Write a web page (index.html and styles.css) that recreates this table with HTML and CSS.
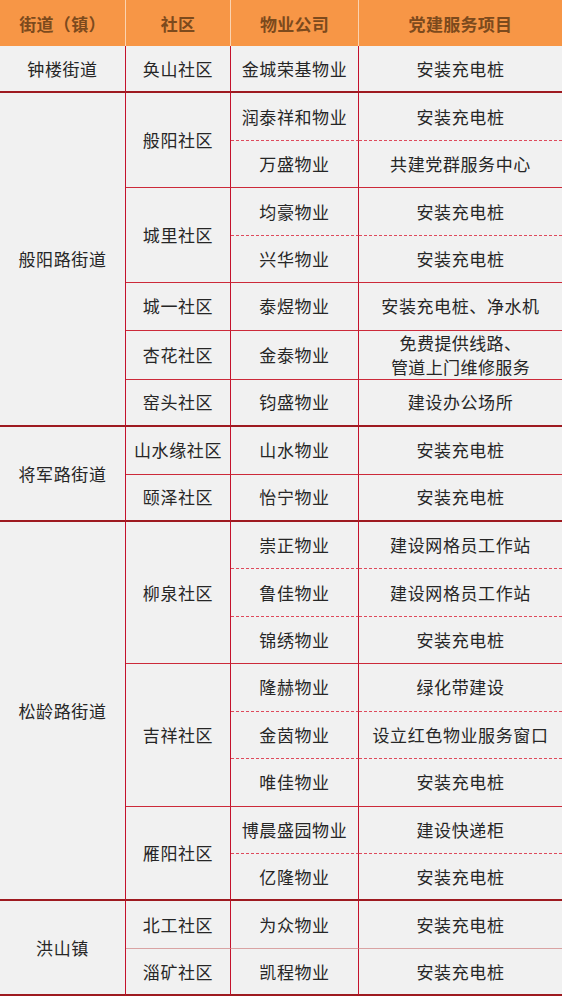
FILE: index.html
```html
<!DOCTYPE html>
<html lang="zh">
<head>
<meta charset="utf-8">
<title>党建服务项目</title>
<link rel="stylesheet" href="styles.css">
</head>
<body>
<table class="grid">
  <colgroup>
    <col class="c1"><col class="c2"><col class="c3"><col class="c4">
  </colgroup>
  <thead>
    <tr class="head">
      <th>街道（镇）</th><th>社区</th><th>物业公司</th><th>党建服务项目</th>
    </tr>
  </thead>
  <tbody>
    <tr>
      <td class="st bt">钟楼街道</td><td class="cm bt">奂山社区</td><td class="co bt">金城荣基物业</td><td class="pj bt">安装充电桩</td>
    </tr>
    <tr>
      <td class="st bt" rowspan="7">般阳路街道</td><td class="cm bs" rowspan="2">般阳社区</td><td class="co bd">润泰祥和物业</td><td class="pj bd">安装充电桩</td>
    </tr>
    <tr>
      <td class="co bs">万盛物业</td><td class="pj bs">共建党群服务中心</td>
    </tr>
    <tr>
      <td class="cm bs" rowspan="2">城里社区</td><td class="co bd">均豪物业</td><td class="pj bd">安装充电桩</td>
    </tr>
    <tr>
      <td class="co bs">兴华物业</td><td class="pj bs">安装充电桩</td>
    </tr>
    <tr>
      <td class="cm bs">城一社区</td><td class="co bs">泰煜物业</td><td class="pj bs">安装充电桩、净水机</td>
    </tr>
    <tr>
      <td class="cm bs">杏花社区</td><td class="co bs">金泰物业</td><td class="pj bs two">免费提供线路、<br>管道上门维修服务</td>
    </tr>
    <tr>
      <td class="cm bt">窑头社区</td><td class="co bt">钧盛物业</td><td class="pj bt">建设办公场所</td>
    </tr>
    <tr>
      <td class="st bt" rowspan="2">将军路街道</td><td class="cm bs">山水缘社区</td><td class="co bs">山水物业</td><td class="pj bs">安装充电桩</td>
    </tr>
    <tr>
      <td class="cm bt">颐泽社区</td><td class="co bt">怡宁物业</td><td class="pj bt">安装充电桩</td>
    </tr>
    <tr>
      <td class="st bt" rowspan="8">松龄路街道</td><td class="cm bs" rowspan="3">柳泉社区</td><td class="co bd">崇正物业</td><td class="pj bd">建设网格员工作站</td>
    </tr>
    <tr>
      <td class="co bd">鲁佳物业</td><td class="pj bd">建设网格员工作站</td>
    </tr>
    <tr>
      <td class="co bs">锦绣物业</td><td class="pj bs">安装充电桩</td>
    </tr>
    <tr>
      <td class="cm bs" rowspan="3">吉祥社区</td><td class="co bd">隆赫物业</td><td class="pj bd">绿化带建设</td>
    </tr>
    <tr>
      <td class="co bd">金茵物业</td><td class="pj bd">设立红色物业服务窗口</td>
    </tr>
    <tr>
      <td class="co bs">唯佳物业</td><td class="pj bs">安装充电桩</td>
    </tr>
    <tr>
      <td class="cm bt" rowspan="2">雁阳社区</td><td class="co bd">博晨盛园物业</td><td class="pj bd">建设快递柜</td>
    </tr>
    <tr>
      <td class="co bt">亿隆物业</td><td class="pj bt">安装充电桩</td>
    </tr>
    <tr>
      <td class="st bt" rowspan="2">洪山镇</td><td class="cm bl">北工社区</td><td class="co bl">为众物业</td><td class="pj bl">安装充电桩</td>
    </tr>
    <tr>
      <td class="cm bt">淄矿社区</td><td class="co bt">凯程物业</td><td class="pj bt">安装充电桩</td>
    </tr>
  </tbody>
</table>
</body>
</html>
```

FILE: styles.css
```css
html, body {
  margin: 0;
  padding: 0;
  background: #ffffff;
}

body {
  width: 562px;
  overflow: hidden;
  font-family: "Noto Sans CJK SC", "Noto Sans", sans-serif;
}

.grid {
  border-collapse: separate;
  border-spacing: 0;
  width: 562px;
  table-layout: fixed;
  background: #f1f1f1;
}

.c1 { width: 126px; }
.c2 { width: 105px; }
.c3 { width: 128px; }
.c4 { width: 203px; }

.head {
  height: 46px;
}

.head th {
  box-sizing: border-box;
  background: #f79646;
  color: #7c4a1d;
  font-size: 17px;
  font-weight: 700;
  letter-spacing: 0.3px;
  padding: 0;
  border-right: 1px solid #fbd3b0;
  text-align: center;
  vertical-align: middle;
}

.head th:last-child {
  border-right: none;
}

tbody tr {
  height: 47.45px;
}

td {
  box-sizing: border-box;
  padding: 0;
  text-align: center;
  vertical-align: middle;
  color: #262626;
  font-size: 17px;
  letter-spacing: 0.6px;
  line-height: 24px;
  border-right: 1px solid #c4122c;
}

td.pj {
  border-right: none;
}

td.two {
  line-height: 24px;
  letter-spacing: 0.4px;
}

.bt { border-bottom: 2px solid #9e1a20; }
.bs { border-bottom: 1px solid #cc2a3a; }
.bl { border-bottom: 1px solid #d9a3a3; }
.bd { border-bottom: 1px dashed #de4a5c; }
```
